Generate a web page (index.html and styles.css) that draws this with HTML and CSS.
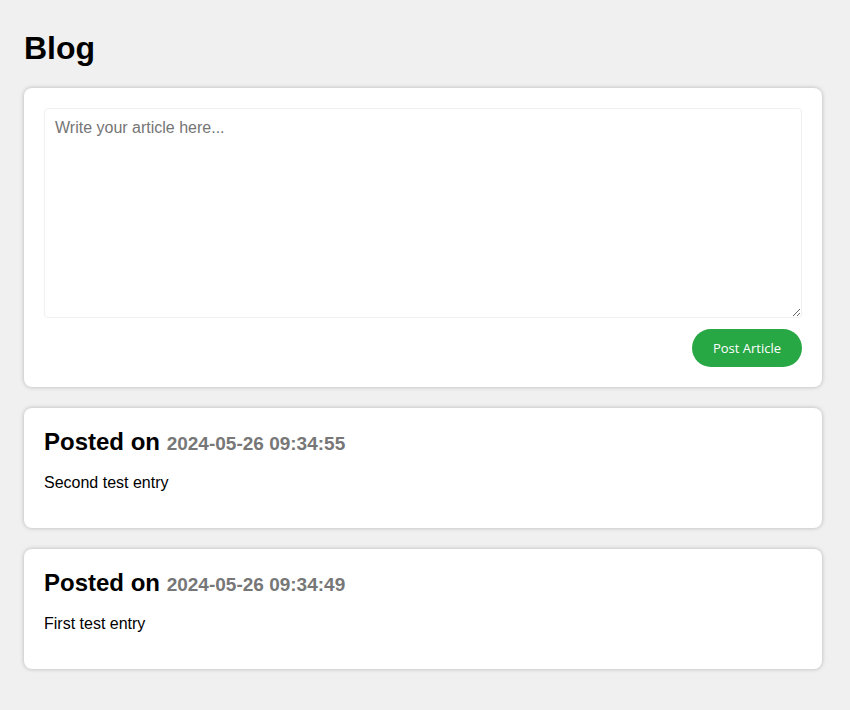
FILE: index.html
```html
<!DOCTYPE html>
<html lang="en">
<head>
<meta charset="utf-8">
<title>Blog</title>
<link rel="stylesheet" href="styles.css">
</head>
<body>
<main class="page">
  <h1 class="title">Blog</h1>
  <section class="card editor">
    <textarea class="editor-input" placeholder="Write your article here..."></textarea>
    <div class="editor-actions">
      <button class="btn-post" type="button">Post Article</button>
    </div>
  </section>
  <article class="card post">
    <h2 class="post-title">Posted on <span class="post-date">2024-05-26 09:34:55</span></h2>
    <p class="post-body">Second test entry</p>
  </article>
  <article class="card post">
    <h2 class="post-title">Posted on <span class="post-date">2024-05-26 09:34:49</span></h2>
    <p class="post-body">First test entry</p>
  </article>
</main>
</body>
</html>
```

FILE: styles.css
```css
html, body {
  margin: 0;
  padding: 0;
  background: #f0f0f0;
}
body {
  font-family: "Liberation Sans", Arial, sans-serif;
  color: #000;
}
.page {
  display: flex;
  flex-direction: column;
  gap: 21px;
  padding: 30px 28px 40px 24px;
}
.title {
  font-size: 32px;
  font-weight: bold;
  margin: 0;
  line-height: 37px;
}
.card {
  background: #fff;
  border-radius: 8px;
  box-shadow: 0 0 4px rgba(0,0,0,0.25);
  padding: 20px;
}
.editor {
  display: flex;
  flex-direction: column;
  gap: 11px;
}
.editor-input {
  box-sizing: border-box;
  width: 100%;
  height: 210px;
  border: 1px solid #f0f0f0;
  border-radius: 4px;
  padding: 10px;
  font-family: "Liberation Sans", Arial, sans-serif;
  font-size: 16px;
  resize: vertical;
  margin: 0;
  display: block;
}
.editor-input::placeholder {
  color: #757575;
}
.editor-input:focus {
  outline: none;
}
.editor-actions {
  display: flex;
  justify-content: flex-end;
}
.btn-post {
  background: #28a745;
  color: #fff;
  border: none;
  border-radius: 19px;
  padding: 10px 21px;
  font-family: "Open Sans", sans-serif;
  font-size: 13px;
  line-height: 18px;
  cursor: pointer;
}
.post-title {
  margin: 0;
  font-size: 24px;
  line-height: 27.6px;
  font-weight: bold;
}
.post-date {
  font-size: 19px;
  color: #777;
}
.post-body {
  margin: 16px 0;
  font-size: 16px;
  line-height: 18.4px;
}
```
